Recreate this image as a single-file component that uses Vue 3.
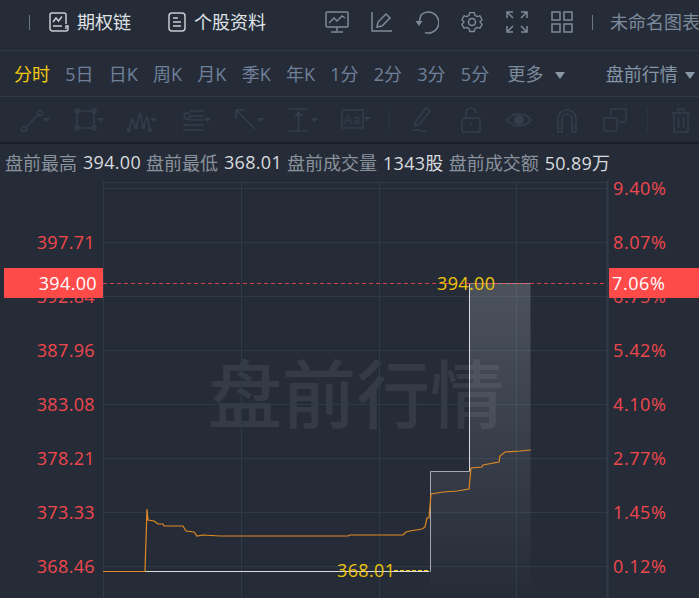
<template>
  <div class="page">
    <header class="topbar">
      <span class="divider first"></span>
      <a class="tab">
        <svg width="20" height="20" viewBox="0 0 20 20"><path d="M17 12V3a2 2 0 0 0-2-2H3a2 2 0 0 0-2 2v13.500a2.500 2.500 0 0 0 2.500 2.500H17a2 2 0 0 0 2-2v-3h-2v3"/><path d="M4 10l3-4 2.500 3L13 4.500M4 14h9"/></svg>
        期权链
      </a>
      <a class="tab second">
        <svg width="18" height="20" viewBox="0 0 18 20"><rect x="1" y="1" width="16" height="18" rx="3"/><path d="M5 6h5M5 10h8M5 14h8"/></svg>
        个股资料
      </a>
      <div class="actions">
        <svg width="24" height="24" viewBox="0 0 24 24"><rect x="1" y="2" width="22" height="15" rx="1"/><path d="M4 13l5-5 3 3 5-5 3 2M12 17v4M6 22h12"/></svg>
        <svg width="24" height="24" viewBox="0 0 24 24"><path d="M2 2v19h20M7 17l1-5L16 4l4 4-8 8z"/></svg>
        <svg width="24" height="24" viewBox="0 0 24 24"><path d="M10 22.500A10.500 10.500 0 1 0 6 5L4 12"/><path class="solid" d="M.5 11h7L4 16z"/></svg>
        <svg width="24" height="24" viewBox="0 0 24 24"><path d="M9.500 1.500h5l.8 3.200 2.300 1.300 3.200-.9 2.400 4.300-2.300 2.600 2.300 2.600-2.400 4.300-3.200-.9-2.300 1.300-.8 3.200h-5l-.8-3.200-2.300-1.300-3.200.9L.8 14.600 3.100 12 .8 9.400l2.400-4.300 3.200.9 2.300-1.300z" transform="translate(1.200 1.200) scale(.9)"/><circle cx="12" cy="12" r="3.500"/></svg>
        <svg width="24" height="24" viewBox="0 0 24 24"><path d="M2 8V2h6M22 8V2h-6M2 16v6h6M22 16v6h-6M3 3l5 5M21 3l-5 5M3 21l5-5M21 21l-5-5"/></svg>
        <svg width="24" height="24" viewBox="0 0 24 24"><rect x="2" y="2" width="8" height="8"/><rect x="14" y="2" width="8" height="8"/><rect x="2" y="14" width="8" height="8"/><rect x="14" y="14" width="8" height="8"/></svg>
      </div>
      <span class="divider last"></span>
      <span class="chart-name">未命名图表</span>
    </header>

    <nav class="periods">
      <span v-for="(p, i) in periods" :key="p" class="period" :class="{ active: i === 0 }">{{ p }}</span>
      <span class="period more">更多<i class="arrow"></i></span>
      <span class="session">盘前行情<i class="arrow"></i></span>
    </nav>

    <div class="tools">
      <svg class="tool" viewBox="0 0 30 30"><circle cx="4" cy="24" r="2.500"/><circle cx="20" cy="8" r="2.500"/><path d="M5 23L19 9"/><path class="fill" d="M23 13h7l-3.500 4z"/></svg>
      <svg class="tool" viewBox="0 0 30 30"><rect x="3" y="6" width="17" height="17"/><circle cx="3" cy="6" r="2"/><circle cx="20" cy="6" r="2"/><circle cx="3" cy="23" r="2"/><circle cx="20" cy="23" r="2"/><path class="fill" d="M23 13h7l-3.500 4z"/></svg>
      <svg class="tool" viewBox="0 0 30 30"><path d="M2 25l3-11 4 8 4-14 3 14 4-10 3 12"/><circle cx="2" cy="25" r="1.500"/><circle cx="9" cy="22" r="1.500"/><circle cx="16" cy="22" r="1.500"/><circle cx="23" cy="25" r="1.500"/><path class="fill" d="M23 13h7l-3.500 4z"/></svg>
      <svg class="tool" viewBox="0 0 30 30"><path d="M9 6h14M9 11h14M9 15h14M2 20h21M2 25h21"/><text x="2" y="15" class="tool-g">G</text><path class="fill" d="M23 13h7l-3.500 4z"/></svg>
      <svg class="tool" viewBox="0 0 30 30"><path d="M2 5h9M2 5v9M2 5l19 19"/><path class="fill" d="M23 13h7l-3.500 4z"/></svg>
      <svg class="tool" viewBox="0 0 30 30"><path d="M1 4h19M1 26h19M10.500 9v16"/><path class="fill" d="M6 11l4.500-5 4.500 5zM23 13h7l-3.500 4z"/></svg>
      <svg class="tool" viewBox="0 0 30 30"><rect x="1" y="5" width="21" height="18"/><text x="3" y="19" class="tool-aa">Aa</text><path class="fill" d="M23 12h7l-3.500 4z"/></svg>
      <span class="tool-sep sep-a"></span>
      <svg class="tool b" viewBox="0 0 30 30"><path d="M7 21l1-5L18 3l4 3-10 13zM5 26c3-3 5-1 8 0s4 1 6 0"/></svg>
      <svg class="tool b" viewBox="0 0 30 30"><rect x="6" y="13" width="18" height="14" rx="2"/><path d="M10 13V8a5 5 0 0 1 10 0M15 18v3"/></svg>
      <svg class="tool b" viewBox="0 0 30 30"><path d="M3 15c6-8 18-8 24 0-6 8-18 8-24 0z"/><circle class="fill" cx="15" cy="15" r="5"/></svg>
      <svg class="tool b" viewBox="0 0 30 30"><path d="M6 27V14a9 9 0 0 1 18 0v13h-4V14a5 5 0 0 0-10 0v13zM6 23h4M20 23h4"/></svg>
      <svg class="tool b" viewBox="0 0 30 30"><path d="M11 10V4h15v13h-7"/><rect x="4" y="13" width="13" height="13" rx="1.500"/></svg>
      <span class="tool-sep sep-b"></span>
      <svg class="tool b" viewBox="0 0 30 30"><path d="M6 8h18M12 8V4h6v4M8 8v19h14V8M12.500 12v11M17.500 12v11"/></svg>
    </div>

    <div class="stats">
      <template v-for="s in stats" :key="s.label">
        <span class="stat-label">{{ s.label }}</span>
        <span class="stat-value">{{ s.value }}</span>
      </template>
    </div>

    <div class="chart">
      <svg class="plot" width="699" height="418" viewBox="0 180 699 418">
        <defs>
          <linearGradient id="area" x1="0" y1="283" x2="0" y2="598" gradientUnits="userSpaceOnUse">
            <stop offset="0" stop-color="#fff" stop-opacity=".18" />
            <stop offset="1" stop-color="#fff" stop-opacity="0" />
          </linearGradient>
        </defs>

        <text x="208" y="422" class="watermark">盘前行情</text>

        <path v-for="y in hLines" :key="y" class="grid" :d="`M103 ${y + .5}H607`" />
        <path v-for="x in vLines" :key="x" class="grid" :d="`M${x + .5} 182V598`" />
        <path class="axis" d="M607.500 180V598" />

        <path class="area" d="M430 598V471H469.500V283H530.500V598Z" />
        <path class="price" d="M103 571.500H429.500" />
        <path class="price dim" d="M430.500 571.500V471.500H469" />
        <path class="price" d="M469.500 471.500V283.500" />
        <path class="price top" d="M470 283.500H530" />
        <path class="avg" :d="avgPath" />

        <path class="last-line" d="M103 283.500H607" />
        <path class="low-line" d="M394 570.500H429" />

        <text v-for="l in leftLabels" :key="l.text" x="95" :y="l.y" class="label end">{{ l.text }}</text>
        <text v-for="l in rightLabels" :key="l.text" x="613" :y="l.y" class="label pct">{{ l.text }}</text>

        <text x="437" y="290" class="mark">394.00</text>
        <text x="337" y="577" class="mark">368.01</text>
      </svg>
      <div class="tag tag-left">394.00</div>
      <div class="tag tag-right">7.06%</div>
    </div>
  </div>
</template>

<script setup>
const periods = ['分时', '5日', '日K', '周K', '月K', '季K', '年K', '1分', '2分', '3分', '5分']

const stats = [
  { label: '盘前最高', value: '394.00' },
  { label: '盘前最低', value: '368.01' },
  { label: '盘前成交量', value: '1343股' },
  { label: '盘前成交额', value: '50.89万' },
]

const hLines = [182, 188, 242, 296, 350, 404, 458, 512, 566]
const vLines = [103, 241, 379, 516]

const leftLabels = [
  { text: '397.71', y: 249 },
  { text: '392.84', y: 303 },
  { text: '387.96', y: 357 },
  { text: '383.08', y: 411 },
  { text: '378.21', y: 465 },
  { text: '373.33', y: 519 },
  { text: '368.46', y: 573 },
]

const rightLabels = [
  { text: '9.40%', y: 195 },
  { text: '8.07%', y: 249 },
  { text: '6.75%', y: 303 },
  { text: '5.42%', y: 357 },
  { text: '4.10%', y: 411 },
  { text: '2.77%', y: 465 },
  { text: '1.45%', y: 519 },
  { text: '0.12%', y: 573 },
]

const avgPoints = [
  [103, 571.5], [145, 571.5], [147, 509], [148, 520], [154, 521], [158, 524], [163, 524], [164, 526],
  [183, 526], [186, 531], [194, 532], [197, 536], [203, 535], [220, 536], [348, 536], [350, 535],
  [403, 535], [406, 532], [410, 531], [422, 529], [425, 527], [427, 518], [429, 518], [431, 494],
  [443, 492], [457, 491], [469, 489], [471, 468], [482, 467], [483, 465], [499, 462], [500, 456],
  [505, 452], [520, 451], [531, 450],
]
const avgPath = 'M' + avgPoints.map(p => p.join(' ')).join('L')
</script>

<style>
html, body {
  margin: 0;
  background: #252c38;
  overflow: hidden;
}
</style>

<style scoped>
.page {
  width: 699px;
  height: 598px;
  overflow: hidden;
  background: #252c38;
  font-family: "Open Sans", "Noto Sans CJK SC", sans-serif;
  font-size: 18px;
  display: flex;
  flex-direction: column;
}

.topbar {
  height: 51px;
  flex: none;
  box-sizing: border-box;
  border-bottom: 1px solid #2f3a47;
  padding-bottom: 6px;
  display: flex;
  align-items: center;
  white-space: nowrap;
}
.divider {
  width: 1px;
  height: 15px;
  background: #6d7681;
  flex: none;
}
.divider.first {
  margin-left: 29px;
}
.divider.last {
  margin-left: 18px;
}
.tab {
  display: flex;
  align-items: center;
  gap: 8px;
  margin-left: 19px;
  color: #dfe2e6;
  line-height: 1;
}
.tab.second {
  margin-left: 37px;
}
.tab svg {
  fill: none;
  stroke: #c9ccd0;
  stroke-width: 1.5;
}
.actions {
  display: flex;
  gap: 21px;
  margin-left: 59px;
}
.actions svg {
  fill: none;
  stroke: #7f8a97;
  stroke-width: 1.500;
}
.actions .solid {
  fill: #7f8a97;
  stroke: none;
}
.chart-name {
  margin-left: 17px;
  color: #7c8a9b;
  line-height: 1;
  flex: none;
}

.periods {
  height: 46px;
  flex: none;
  box-sizing: border-box;
  border-bottom: 1px solid #2f3a47;
  padding-left: 14px;
  padding-bottom: 1px;
  display: flex;
  align-items: center;
  gap: 15.250px;
  white-space: nowrap;
  color: #6f8098;
}
.period.active {
  color: #f2c811;
}
.more {
  margin-left: 3px;
  color: #7c8a9b;
}
.session {
  margin-left: 25px;
  color: #8494a7;
}
.arrow {
  display: inline-block;
  width: 0;
  height: 0;
  margin-left: 7px;
  border-left: 5px solid transparent;
  border-right: 5px solid transparent;
  border-top: 7px solid #8a97a6;
  vertical-align: 2px;
}
.more .arrow {
  margin-left: 12px;
}

.tools {
  height: 47px;
  flex: none;
  box-sizing: border-box;
  border-bottom: 2px solid #191e27;
  padding-left: 20px;
  display: flex;
  align-items: center;
  gap: 23.500px;
}
.tool {
  width: 30px;
  height: 30px;
  flex: none;
  fill: none;
  stroke: #343d4a;
  stroke-width: 1.500;
}
.tool.b {
  margin-left: -5.500px;
}
.tool .fill {
  fill: #343d4a;
  stroke: none;
}
.tool-g,
.tool-aa {
  fill: #343d4a;
  stroke: none;
  font-size: 11px;
  font-weight: 700;
  font-family: "Liberation Sans", sans-serif;
}
.tool-aa {
  font-size: 13px;
  font-weight: 400;
}
.tool-sep {
  width: 1px;
  height: 24px;
  background: #2b3441;
  flex: none;
}
.sep-a {
  margin-left: -6px;
}
.sep-b {
  margin-left: -6px;
}

.stats {
  height: 36px;
  flex: none;
  padding-left: 5px;
  display: flex;
  align-items: center;
  gap: 5px;
  white-space: nowrap;
}
.stat-label {
  color: #8a929c;
}
.stat-value {
  color: #d9dbde;
  letter-spacing: .3px;
  margin-left: 1px;
}

.chart {
  position: relative;
  flex: 1;
}
.plot {
  display: block;
  overflow: visible;
}
.watermark {
  font-size: 74px;
  font-weight: 500;
  fill: #fff;
  fill-opacity: .07;
  font-family: "Noto Sans CJK SC", sans-serif;
}
.grid {
  stroke: #2f3a46;
  stroke-width: 1;
  fill: none;
}
.axis {
  stroke: #313c4b;
  stroke-width: 2;
  fill: none;
}
.area {
  fill: url(#area);
}
.price {
  fill: none;
  stroke: #d8dadd;
  stroke-width: 1;
}
.price.dim {
  stroke: #a5a9ae;
}
.price.top {
  stroke: #8c9198;
}
.avg {
  fill: none;
  stroke: #e08a24;
  stroke-width: 1.200;
}
.last-line {
  fill: none;
  stroke: #ff4a4a;
  stroke-width: 1;
  stroke-dasharray: 4 3;
  stroke-opacity: .8;
}
.low-line {
  fill: none;
  stroke: #f2c811;
  stroke-width: 1;
  stroke-dasharray: 4 2;
}
.label {
  fill: #f0474c;
  font-size: 18px;
  letter-spacing: .35px;
}
.label.end {
  text-anchor: end;
}
.label.pct {
  letter-spacing: .6px;
}
.mark {
  fill: #ecc40c;
  font-size: 18px;
  letter-spacing: .35px;
}
.tag {
  position: absolute;
  top: 88px;
  height: 30px;
  line-height: 30px;
  background: #ff4a4a;
  color: #fff;
  letter-spacing: .35px;
}
.tag-left {
  left: 4px;
  width: 99px;
  box-sizing: border-box;
  padding-right: 6px;
  text-align: right;
}
.tag-right {
  left: 609px;
  width: 90px;
  box-sizing: border-box;
  padding-left: 3px;
  letter-spacing: .6px;
}
</style>
